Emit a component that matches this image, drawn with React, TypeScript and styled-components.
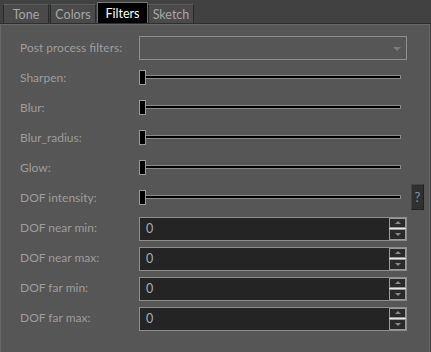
import React, { useState } from 'react';
import styled, { createGlobalStyle } from 'styled-components';

const GlobalStyle = createGlobalStyle`
  html, body {
    margin: 0;
    padding: 0;
    background: #424242;
    width: 431px;
    height: 352px;
    overflow: hidden;
  }
  * { box-sizing: border-box; }
`;

const TABS = ['Tone', 'Colors', 'Filters', 'Sketch'];

const SLIDERS = ['Sharpen:', 'Blur:', 'Blur_radius:', 'Glow:', 'DOF intensity:'];

const NUMBERS = ['DOF near min:', 'DOF near max:', 'DOF far min:', 'DOF far max:'];

const Slider = ({ value }: { value: number }) => (
  <SliderTrackWrap>
    <SliderTrack />
    <SliderThumb style={{ left: `${value * 255}px` }} />
  </SliderTrackWrap>
);

const NumberField = ({ value }: { value: number }) => (
  <NumberBox>
    <NumberText>{value}</NumberText>
    <SpinColumn>
      <SpinButton>
        <SpinArrow $up />
      </SpinButton>
      <SpinDivider />
      <SpinButton>
        <SpinArrow />
      </SpinButton>
    </SpinColumn>
  </NumberBox>
);

const App = () => {
  const [active, setActive] = useState('Filters');

  return (
    <>
      <GlobalStyle />
      <Window>
        <TabBar>
          {TABS.map(t => (
            <Tab key={t} $active={t === active} onClick={() => setActive(t)}>
              {t}
            </Tab>
          ))}
        </TabBar>
        <Panel>
          <Form>
            <Label>Post process filters:</Label>
            <Dropdown>
              <DropArrow />
            </Dropdown>
            <span />

            {SLIDERS.map(name => (
              <React.Fragment key={name}>
                <Label>{name}</Label>
                <Slider value={0} />
                {name === 'DOF intensity:' ? <HelpButton>?</HelpButton> : <span />}
              </React.Fragment>
            ))}

            {NUMBERS.map(name => (
              <React.Fragment key={name}>
                <Label>{name}</Label>
                <NumberField value={0} />
                <span />
              </React.Fragment>
            ))}
          </Form>
        </Panel>
      </Window>
    </>
  );
};

// Styled components
const Window = styled.div`
  width: 431px;
  height: 352px;
  display: flex;
  flex-direction: column;
  font-family: Lato, 'Noto Sans', sans-serif;
  font-size: 12px;
`;

const TabBar = styled.div`
  height: 24px;
  display: flex;
  align-items: flex-end;
  padding-left: 3px;
  background: #414141;
  border-bottom: 1px solid #2e2e2e;
`;

const Tab = styled.div<{ $active: boolean }>`
  height: ${p => (p.$active ? '21px' : '19px')};
  width: ${p => (p.$active ? '51px' : '46px')};
  margin-right: ${p => (p.$active ? '0' : '1px')};
  display: flex;
  align-items: center;
  justify-content: center;
  background: ${p => (p.$active ? '#000000' : '#4a4a4a')};
  color: ${p => (p.$active ? '#ffffff' : '#a6a6a6')};
  border: 1px solid ${p => (p.$active ? '#6a6a6a' : '#2a2a2a')};
  border-top-color: ${p => (p.$active ? '#7a7a7a' : '#5c5c5c')};
  border-bottom: none;
  font-size: 12.5px;
  cursor: default;
`;

const Panel = styled.div`
  flex: 1;
  width: 430px;
  background: #565656;
  border: 1px solid #676767;
  border-bottom: none;
  padding: 7px 0 0 19px;
`;

const Form = styled.div`
  display: grid;
  grid-template-columns: 119px 268px 20px;
  grid-auto-rows: 30px;
  align-items: center;
`;

const Label = styled.div`
  color: #9d9d9d;
  font-size: 12px;
  white-space: nowrap;
`;

const Dropdown = styled.div`
  position: relative;
  height: 24px;
  border: 1px solid #8e8e8e;
  background: #565656;
  margin-top: 2px;
`;

const DropArrow = styled.div`
  position: absolute;
  right: 5px;
  top: 10px;
  width: 0;
  height: 0;
  border-left: 4px solid transparent;
  border-right: 4px solid transparent;
  border-top: 4px solid #7a7a7a;
`;

const SliderTrackWrap = styled.div`
  position: relative;
  width: 262px;
  height: 15px;
  display: flex;
  align-items: center;
`;

const SliderTrack = styled.div`
  margin-left: 6px;
  flex: 1;
  height: 4px;
  background: #000000;
  border: 1px solid #8a8a8a;
  border-left: none;
`;

const SliderThumb = styled.div`
  position: absolute;
  top: 0;
  width: 7px;
  height: 15px;
  background: #000000;
  border: 1px solid #9a9a9a;
`;

const HelpButton = styled.div`
  margin-left: 4px;
  width: 13px;
  height: 26px;
  display: flex;
  align-items: center;
  justify-content: center;
  background: #303030;
  border: 1px solid #222222;
  border-top-color: #444444;
  border-left-color: #444444;
  color: #8593ad;
  font-size: 13px;
`;

const NumberBox = styled.div`
  height: 24px;
  display: flex;
  background: #242424;
  border: 1px solid #8e8e8e;
  margin-top: 3px;
`;

const NumberText = styled.div`
  flex: 1;
  padding-left: 6px;
  display: flex;
  align-items: center;
  color: #a3aec0;
  font-size: 12.5px;
`;

const SpinColumn = styled.div`
  width: 17px;
  display: flex;
  flex-direction: column;
`;

const SpinButton = styled.div`
  flex: 1;
  display: flex;
  align-items: center;
  justify-content: center;
  background: #2a2a2a;
  border: 1px solid #9a9a9a;
`;

const SpinDivider = styled.div`
  height: 1px;
  background: #e6e6e6;
`;

const SpinArrow = styled.div<{ $up?: boolean }>`
  width: 0;
  height: 0;
  border-left: 3px solid transparent;
  border-right: 3px solid transparent;
  ${p => (p.$up ? 'border-bottom: 3px solid #8a8a8a;' : 'border-top: 3px solid #8a8a8a;')}
`;

export default App;
